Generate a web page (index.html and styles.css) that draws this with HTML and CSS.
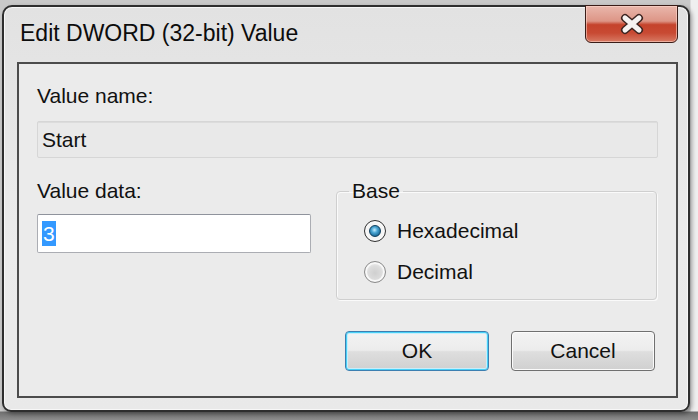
FILE: index.html
```html
<!DOCTYPE html>
<html lang="en">
<head>
    <meta charset="UTF-8">
    <title>Edit DWORD (32-bit) Value</title>
    <link rel="stylesheet" href="styles.css">
</head>
<body>
    <div class="window">
        <div class="titlebar">
            <span class="title">Edit DWORD (32-bit) Value</span>
            <button class="close" aria-label="Close">
                <svg width="28" height="22" viewBox="0 0 28 22">
                    <path d="M7 5 L21 17 M21 5 L7 17" stroke="#3d2420" stroke-width="8" stroke-linecap="round"/>
                    <path d="M7 5 L21 17 M21 5 L7 17" stroke="#f6f3f2" stroke-width="5" stroke-linecap="round"/>
                </svg>
            </button>
        </div>

        <div class="panel">
            <div class="label">Value name:</div>
            <div class="field readonly">Start</div>

            <div class="row">
                <div class="data-col">
                    <div class="label">Value data:</div>
                    <div class="field input"><span class="selected">3</span></div>
                </div>

                <fieldset class="base">
                    <legend>Base</legend>
                    <div class="option">
                        <span class="radio checked"><span class="dot"></span></span>
                        <span>Hexadecimal</span>
                    </div>
                    <div class="option">
                        <span class="radio"></span>
                        <span>Decimal</span>
                    </div>
                </fieldset>
            </div>

            <div class="buttons">
                <button class="btn default">OK</button>
                <button class="btn">Cancel</button>
            </div>
        </div>
    </div>
</body>
</html>
```

FILE: styles.css
```css
* {
    margin: 0;
    padding: 0;
    box-sizing: border-box;
}

body {
    width: 698px;
    height: 420px;
    overflow: hidden;
    font-family: 'Liberation Sans', Arial, sans-serif;
    color: #111;
    background:
        linear-gradient(to bottom, transparent 0, transparent 411px, #6f6f6f 412px, #8d8d8d 420px),
        linear-gradient(to right, #c9c9c9 0, #c9c9c9 690px, #efefef 691px);
}

.window {
    margin: 5px 0 0 2px;
    width: 688px;
    height: 407px;
    border: 2px solid #2e2e2e;
    border-radius: 10px 10px 9px 9px;
    background: linear-gradient(to bottom, #e2e2e2, #ebebeb 60%, #e9e9e9);
    box-shadow: inset 0 0 0 1px #f7f7f7, 2px 2px 4px rgba(0, 0, 0, 0.35);
    padding: 0 10px 12px 13px;
    display: flex;
    flex-direction: column;
}

.titlebar {
    height: 55px;
    flex: none;
    display: flex;
    justify-content: space-between;
    align-items: flex-start;
}

.title {
    font-size: 23px;
    line-height: 28px;
    padding: 12px 0 0 3px;
    color: #0c0c0c;
}

.close {
    width: 93px;
    height: 38px;
    margin-top: -2px;
    border: 1px solid #3a1d18;
    border-radius: 0 0 6px 6px;
    background: linear-gradient(to bottom, #e9b7ac 0%, #dd9586 42%, #c5432c 52%, #c84a33 75%, #d87a64 100%);
    box-shadow: inset 0 0 0 1px rgba(255, 220, 210, 0.55);
    display: flex;
    align-items: center;
    justify-content: center;
}

.panel {
    flex: 1;
    border: 2px solid #4c4c4c;
    background: #ebebeb;
    padding: 20px 18px 0 18px;
}

.label {
    font-size: 21px;
    line-height: 24px;
}

.field {
    font-size: 21px;
    display: flex;
    align-items: center;
    padding-left: 4px;
}

.readonly {
    margin-top: 13px;
    height: 37px;
    background: #e9e9e9;
    border: 1px solid #d6d6d6;
    border-radius: 2px;
    box-shadow: inset 0 1px 0 #dcdcdc;
}

.row {
    display: flex;
    align-items: flex-start;
    margin-top: 21px;
}

.data-col {
    width: 274px;
}

.input {
    margin-top: 11px;
    height: 39px;
    background: #fff;
    border: 1px solid #abadb3;
    border-top-color: #8f939c;
    border-radius: 2px;
}

.selected {
    background: #3399ff;
    color: #fff;
    line-height: 25px;
    padding: 0 1px;
}

.base {
    margin-left: 25px;
    width: 321px;
    height: 121px;
    border: 1px solid #cfcfcf;
    border-radius: 4px;
    box-shadow: inset 1px 1px 0 #fafafa, 1px 1px 0 #fafafa;
    padding: 16px 0 0 0;
    display: flex;
    flex-direction: column;
    gap: 17px;
}

.base legend {
    font-size: 21px;
    line-height: 24px;
    margin-left: 12px;
    padding: 0 3px;
}

.option {
    display: flex;
    align-items: center;
    gap: 11px;
    margin-left: 27px;
    font-size: 21px;
    line-height: 24px;
}

.radio {
    width: 22px;
    height: 22px;
    border-radius: 50%;
    border: 1px solid #8a8a8a;
    background: radial-gradient(circle at 50% 55%, #cfcfcf 0, #dcdcdc 45%, #f4f4f4 80%);
    box-shadow: inset 0 0 0 2px #f8f8f8;
    display: grid;
    place-items: center;
}

.radio.checked {
    border-color: #2f2f2f;
    background: #f4f4f4;
}

.dot {
    width: 12px;
    height: 12px;
    border-radius: 50%;
    border: 1px solid #0f3f5e;
    background: radial-gradient(circle at 45% 40%, #c6eeff 0, #4aa6d4 35%, #15628f 80%);
}

.buttons {
    display: flex;
    justify-content: flex-end;
    gap: 22px;
    margin-top: 31px;
    padding-right: 3px;
}

.btn {
    width: 144px;
    height: 40px;
    font-family: inherit;
    font-size: 21px;
    color: #111;
    border: 1px solid #707070;
    border-radius: 4px;
    background: linear-gradient(to bottom, #f3f3f3 0%, #ececec 48%, #dedede 52%, #d0d0d0 100%);
    box-shadow: inset 0 0 0 1px #fbfbfb;
}

.btn.default {
    border-color: #3c7fb1;
    box-shadow: inset 0 0 0 1px #48d0f6, inset 0 0 0 2px #c8eefb;
}
```
